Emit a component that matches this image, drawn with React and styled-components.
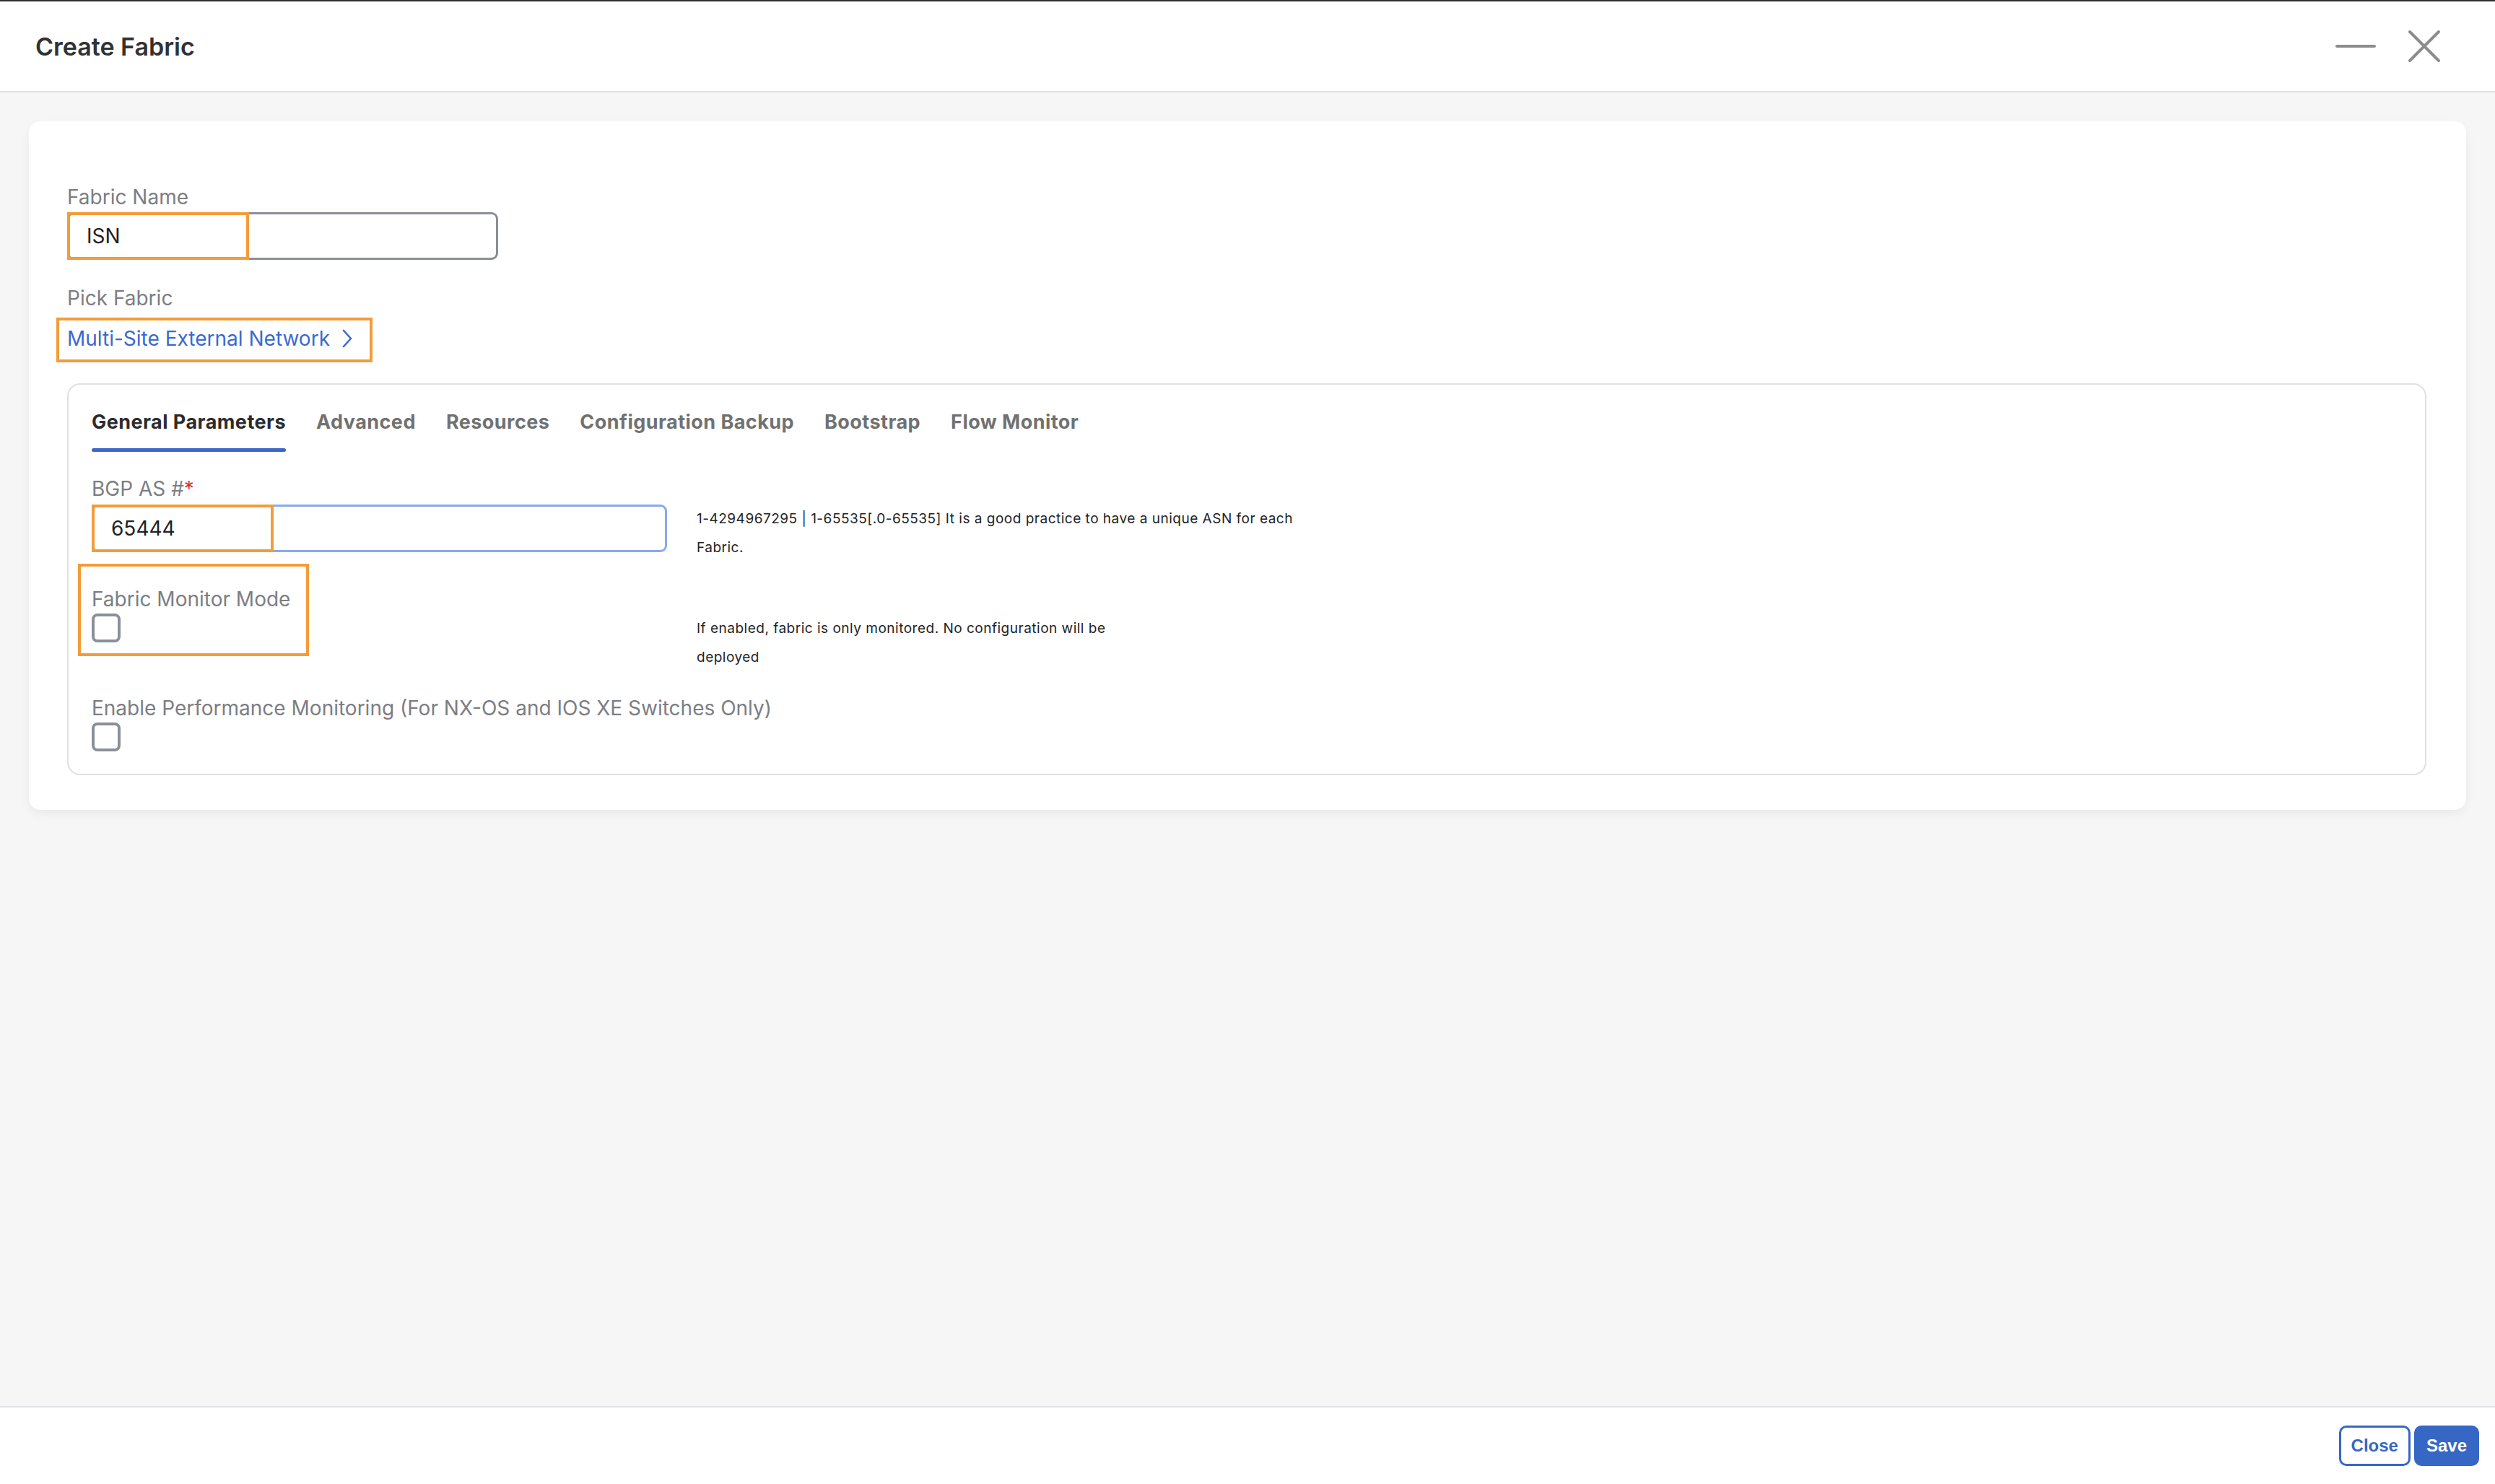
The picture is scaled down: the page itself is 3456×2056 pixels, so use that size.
import React from 'react';
import styled, { createGlobalStyle } from 'styled-components';

const GlobalStyle = createGlobalStyle`
  html, body, #root {
    height: 100%;
  }
  body {
    margin: 0;
    font-family: Inter, "Noto Sans", sans-serif;
    background: #f6f6f6;
  }
  * {
    box-sizing: border-box;
  }
`;

const Page = styled.div`
  height: 100%;
  display: flex;
  flex-direction: column;
  border-top: 2px solid #2e2e2e;
`;

const Header = styled.header`
  height: 126px;
  flex-shrink: 0;
  display: flex;
  align-items: center;
  justify-content: space-between;
  padding: 0 75px 0 49px;
  background: #fff;
  border-bottom: 2px solid #e1e1e1;
`;

const Title = styled.h1`
  margin: 0;
  font-size: 34px;
  font-weight: 600;
  color: #303236;
`;

const WindowControls = styled.div`
  display: flex;
  align-items: center;
  gap: 44px;
`;

const IconButton = styled.button`
  border: 0;
  padding: 0;
  background: none;
  display: flex;
  cursor: pointer;
`;

const Body = styled.main`
  flex: 1;
  padding: 40px 40px 0;
`;

const Card = styled.section`
  background: #fff;
  border-radius: 16px;
  padding: 89px 55px 48px 53px;
  box-shadow: 0 6px 14px rgba(0, 0, 0, 0.05);
`;

const Label = styled.div`
  font-size: 28px;
  line-height: 32px;
  color: #7c7e83;
  white-space: nowrap;
  margin-top: ${(p) => p.$top || 0}px;
`;

const Required = styled.span`
  color: #d6342c;
`;

const InputWrap = styled.div`
  position: relative;
  width: ${(p) => p.$width}px;
  margin-top: ${(p) => p.$top || 5}px;
`;

const TextInput = styled.input`
  display: block;
  width: 100%;
  height: 66px;
  padding: 0 24px;
  font-family: inherit;
  font-size: 28px;
  color: #1f2125;
  background: #fff;
  border: 3px solid ${(p) => (p.$focused ? '#88aaea' : '#8a8f97')};
  border-radius: 9px;
  outline: none;
`;

/* orange call-out drawn over the start of an input */
const Callout = styled.span`
  position: absolute;
  left: 0;
  top: 0;
  bottom: 0;
  width: 252px;
  border: 4px solid #f39c3a;
  pointer-events: none;
`;

const Highlight = styled.div`
  display: ${(p) => (p.$inline ? 'inline-flex' : 'block')};
  border: 4px solid #f39c3a;
  margin-left: ${(p) => p.$shift}px;
  padding: ${(p) => p.$pad};
  width: ${(p) => (p.$width ? `${p.$width}px` : 'auto')};
`;

const LinkBlock = styled.div`
  margin-top: 11px;
`;

const FabricLink = styled.a`
  display: inline-flex;
  align-items: center;
  gap: 15px;
  font-size: 28px;
  line-height: 32px;
  color: #3b69cf;
  text-decoration: none;
  cursor: pointer;
`;

const Panel = styled.div`
  margin-top: 29px;
  border: 2px solid #e0e0e0;
  border-radius: 18px;
  padding: 36px 32px 31px;
`;

const Tabs = styled.div`
  display: flex;
  gap: 42px;
`;

const Tab = styled.div`
  position: relative;
  padding-bottom: 26px;
  font-size: 27px;
  line-height: 31px;
  font-weight: 700;
  letter-spacing: 0.45px;
  color: ${(p) => (p.$active ? '#2b2c2f' : '#717171')};
  cursor: pointer;

  &::after {
    content: '';
    display: ${(p) => (p.$active ? 'block' : 'none')};
    position: absolute;
    left: 0;
    right: 0;
    bottom: 0;
    height: 5px;
    border-radius: 3px;
    background: #3d66cb;
  }
`;

/* field on the left, hint text in a second column; the hint may run past the field's bottom */
const FieldRow = styled.div`
  display: grid;
  grid-template-columns: 838px auto;
  align-items: start;
  margin-top: ${(p) => p.$top}px;
`;

const Field = styled.div`
  margin-top: ${(p) => p.$top}px;
`;

const Help = styled.div`
  padding-top: ${(p) => p.$offset}px;
  margin-bottom: ${(p) => -(p.$overhang || 0)}px;
  max-width: ${(p) => p.$max}px;
  font-size: 19px;
  line-height: 40px;
  letter-spacing: 0.5px;
  color: #222326;
`;

const Checkbox = styled.span`
  display: block;
  width: 40px;
  height: 40px;
  margin-top: 4px;
  border: 4px solid #8a9098;
  border-radius: 8px;
  background: #fff;
`;

const Footer = styled.footer`
  flex-shrink: 0;
  height: 108px;
  display: flex;
  align-items: center;
  justify-content: flex-end;
  gap: 5px;
  padding: 0 22px;
  background: #fff;
  border-top: 2px solid #e2e4e8;
`;

const Button = styled.button`
  height: 56px;
  padding: 0 14px;
  font-family: "Liberation Sans", Arial, sans-serif;
  font-size: 24px;
  font-weight: 700;
  border-radius: 10px;
  border: 3px solid #3767c5;
  background: ${(p) => (p.$primary ? '#3767c5' : '#fff')};
  color: ${(p) => (p.$primary ? '#fff' : '#3767c5')};
  cursor: pointer;
`;

const tabs = ['General Parameters', 'Advanced', 'Resources', 'Configuration Backup', 'Bootstrap', 'Flow Monitor'];

export default function App() {
  return (
    <>
      <GlobalStyle />
      <Page>
        <Header>
          <Title>Create Fabric</Title>
          <WindowControls>
            <IconButton aria-label="Minimize">
              <svg width="56" height="8" viewBox="0 0 56 8">
                <line x1="2" y1="4" x2="54" y2="4" stroke="#8c8c8c" strokeWidth="4" strokeLinecap="round" />
              </svg>
            </IconButton>
            <IconButton aria-label="Close window">
              <svg width="46" height="46" viewBox="0 0 46 46">
                <path d="M3 3 L43 43 M43 3 L3 43" stroke="#8c8c8c" strokeWidth="4" strokeLinecap="round" />
              </svg>
            </IconButton>
          </WindowControls>
        </Header>

        <Body>
          <Card>
            <Label>Fabric Name</Label>
            <InputWrap $width={597}>
              <TextInput defaultValue="ISN" />
              <Callout />
            </InputWrap>

            <Label $top={37}>Pick Fabric</Label>
            <LinkBlock>
              <Highlight $inline $shift={-15} $pad="9px 22px 13px 11px">
                <FabricLink>
                  Multi-Site External Network
                  <svg width="18" height="26" viewBox="0 0 18 26">
                    <polyline points="4,2 14,13 4,24" fill="none" stroke="#3b69cf" strokeWidth="2.6" strokeLinecap="round" strokeLinejoin="round" />
                  </svg>
                </FabricLink>
              </Highlight>
            </LinkBlock>

            <Panel>
              <Tabs>
                {tabs.map((t, i) => (
                  <Tab key={t} $active={i === 0}>{t}</Tab>
                ))}
              </Tabs>

              <FieldRow $top={35}>
                <div>
                  <Label>
                    BGP AS #<Required>*</Required>
                  </Label>
                  <InputWrap $width={797} $top={6}>
                    <TextInput $focused defaultValue="65444" />
                    <Callout />
                  </InputWrap>
                </div>
                <Help $offset={38} $overhang={14} $max={870}>
                  1-4294967295 | 1-65535[.0-65535] It is a good practice to have a unique ASN for each Fabric.
                </Help>
              </FieldRow>

              <FieldRow $top={16}>
                <Highlight $shift={-19} $pad="29px 0 15px 15px" $width={320}>
                  <Label>Fabric Monitor Mode</Label>
                  <Checkbox role="checkbox" aria-checked="false" />
                </Highlight>
                <Help $offset={70} $overhang={22} $max={620}>
                  If enabled, fabric is only monitored. No configuration will be deployed
                </Help>
              </FieldRow>

              <Field $top={56}>
                <Label>Enable Performance Monitoring (For NX-OS and IOS XE Switches Only)</Label>
                <Checkbox role="checkbox" aria-checked="false" />
              </Field>
            </Panel>
          </Card>
        </Body>

        <Footer>
          <Button>Close</Button>
          <Button $primary>Save</Button>
        </Footer>
      </Page>
    </>
  );
}
